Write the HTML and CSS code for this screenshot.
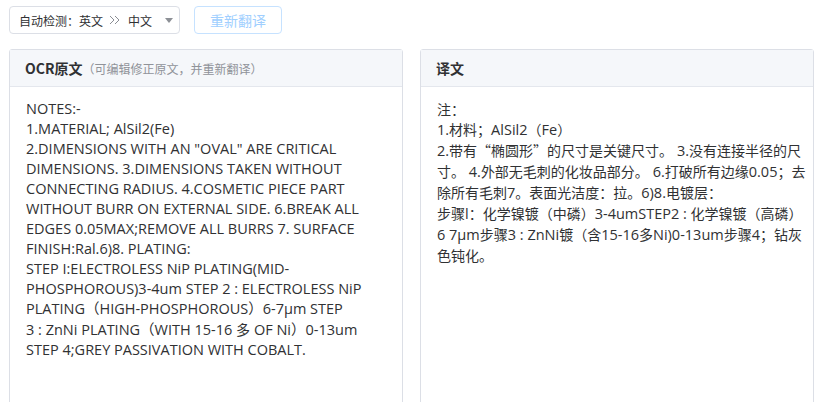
FILE: index.html
```html
<!DOCTYPE html>
<html lang="zh-CN">
<head>
<meta charset="utf-8">
<title>OCR翻译</title>
<link rel="stylesheet" href="styles.css">
</head>
<body>
<div class="page">
  <div class="toolbar">
    <div class="select">
      <span class="sel-text">自动检测：英文</span>
      <svg class="darrow" width="11" height="10" viewBox="0 0 11 10"><path d="M1 1l4 4-4 4M6 1l4 4-4 4" fill="none" stroke="#8a8d93" stroke-width="1"/></svg>
      <span class="sel-text">中文</span>
      <svg class="caret" width="8" height="5" viewBox="0 0 8 5"><path d="M0 0h8L4 5z" fill="#8d9096"/></svg>
    </div>
    <button class="btn" disabled>重新翻译</button>
  </div>
  <div class="panels">
    <div class="panel">
      <div class="panel-head"><span class="title">OCR原文</span><span class="hint">（可编辑修正原文，并重新翻译）</span></div>
      <div class="panel-body src">NOTES:-<br>1.MATERIAL; AlSil2(Fe)<br>2.DIMENSIONS WITH AN "OVAL" ARE CRITICAL<br>DIMENSIONS. 3.DIMENSIONS TAKEN WITHOUT<br>CONNECTING RADIUS. 4.COSMETIC PIECE PART<br>WITHOUT BURR ON EXTERNAL SIDE. 6.BREAK ALL<br>EDGES 0.05MAX;REMOVE ALL BURRS 7. SURFACE<br>FINISH:Ral.6)8. PLATING:<br>STEP I:ELECTROLESS NiP PLATING(MID-<br>PHOSPHOROUS)3-4um STEP 2 : ELECTROLESS NiP<br>PLATING（HIGH-PHOSPHOROUS）6-7μm STEP<br>3 : ZnNi PLATING（WITH 15-16 <span class="cjk">多</span> OF Ni）0-13um<br>STEP 4;GREY PASSIVATION WITH COBALT.</div>
    </div>
    <div class="panel">
      <div class="panel-head"><span class="title">译文</span></div>
      <div class="panel-body dst">注：<br><span class="lat">1.</span>材料；<span class="lat">AlSil2</span>（<span class="lat">Fe</span>）<br><span class="lat">2.</span>带有“椭圆形”的尺寸是关键尺寸。<span class="lat"> 3.</span>没有连接半径的尺<br>寸。<span class="lat"> 4.</span>外部无毛刺的化妆品部分。<span class="lat"> 6.</span>打破所有边缘<span class="lat">0.05</span>；去<br>除所有毛刺<span class="lat">7</span>。表面光洁度：拉。<span class="lat">6)8.</span>电镀层：<br>步骤<span class="lat">l</span>：化学镍镀（中磷）<span class="lat">3-4umSTEP2 : </span>化学镍镀（高磷）<br><span class="lat">6 7μm</span>步骤<span class="lat">3 : ZnNi</span>镀（含<span class="lat">15-16</span>多<span class="lat">Ni)0-13um</span>步骤<span class="lat">4</span>；钻灰<br>色钝化。</div>
    </div>
  </div>
</div>
</body>
</html>
```
FILE: styles.css
```css
html, body {
  margin: 0;
  padding: 0;
  overflow: hidden;
  background: #ffffff;
  font-family: "Noto Sans CJK SC", "Open Sans", sans-serif;
  color: #303133;
}
.page {
  padding: 6px 9px 0 9px;
}
.toolbar {
  display: flex;
  align-items: center;
  gap: 14px;
  height: 28px;
}
.select {
  box-sizing: border-box;
  width: 171px;
  height: 28px;
  border: 1px solid #dcdfe6;
  border-radius: 4px;
  display: flex;
  align-items: center;
  padding-left: 9px;
  font-size: 12px;
  color: #303133;
}
.darrow {
  margin: 0 8px 0 6px;
}
.caret {
  margin-left: auto;
  margin-right: 6px;
}
.btn {
  box-sizing: border-box;
  width: 88px;
  height: 28px;
  border: 1px solid #c6e2ff;
  border-radius: 4px;
  background: #ffffff;
  color: #a0cfff;
  font-family: "Noto Sans CJK SC", sans-serif;
  font-size: 14px;
  padding: 0;
}
.panels {
  display: flex;
  gap: 17px;
  margin-top: 15px;
}
.panel {
  box-sizing: border-box;
  width: 394px;
  height: 420px;
  border: 1px solid #dcdfe6;
  border-radius: 3px;
}
.panel-head {
  height: 37px;
  box-sizing: border-box;
  background: #f5f7fa;
  border-bottom: 1px solid #e4e7ed;
  display: flex;
  align-items: center;
  padding-left: 15px;
}
.title {
  font-size: 14px;
  font-weight: bold;
  color: #303133;
}
.hint {
  font-size: 12px;
  color: #909399;
}
.panel-body {
  padding: 12px 10px 0 16px;
  font-size: 14px;
  line-height: 20px;
  color: #303133;
  white-space: nowrap;
}
.src {
  font-family: "Open Sans", "Noto Sans CJK SC", sans-serif;
  font-size: 14.5px;
}
.cjk {
  font-family: "Noto Sans CJK SC", sans-serif;
  font-size: 14px;
}
.lat {
  font-family: "Open Sans", sans-serif;
  font-size: 14.5px;
}
```
